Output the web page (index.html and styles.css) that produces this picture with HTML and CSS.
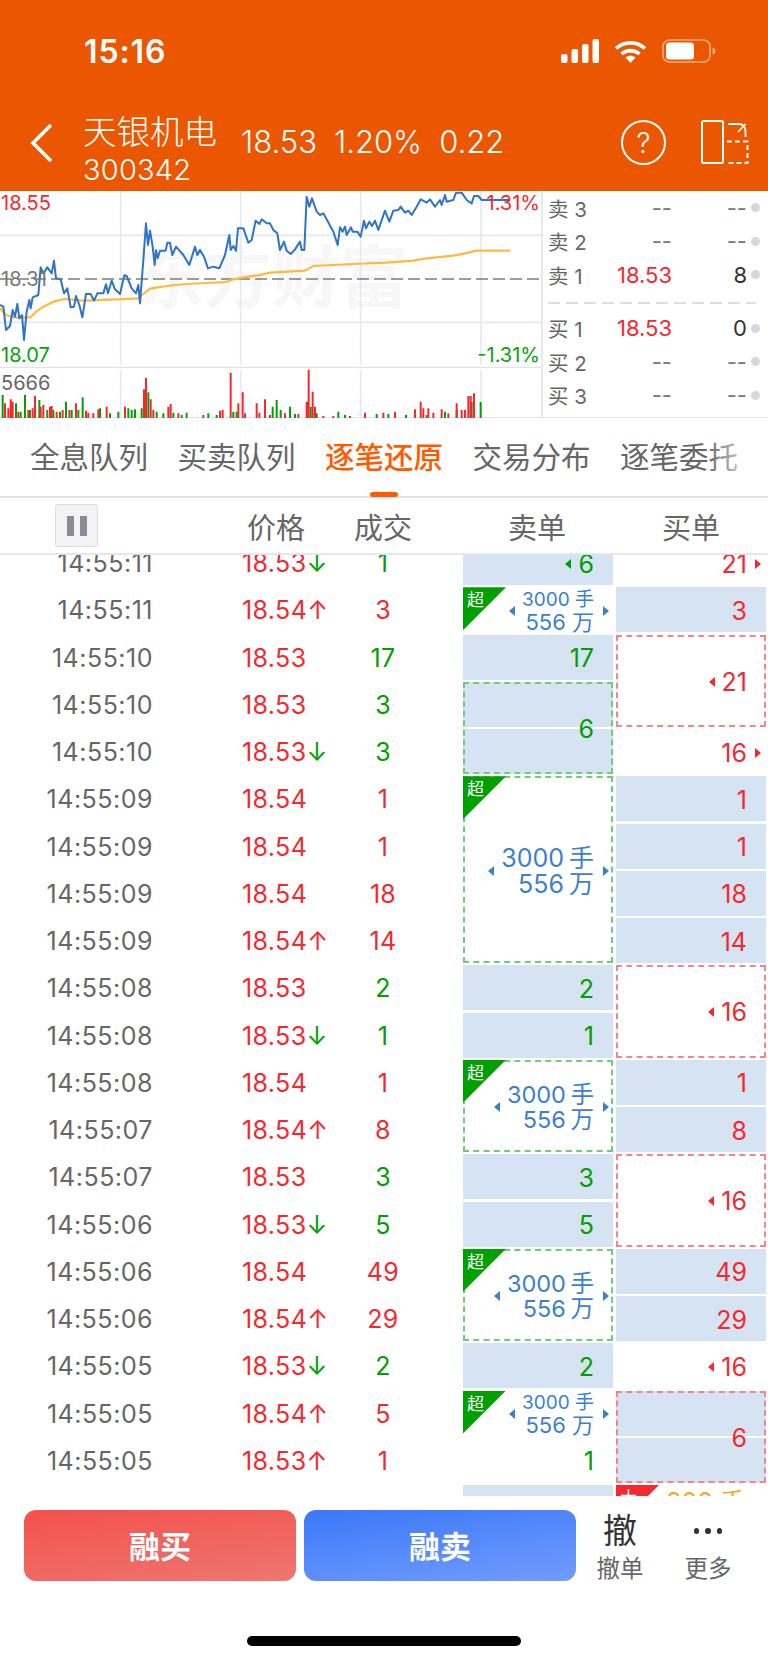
FILE: index.html
```html
<!DOCTYPE html>
<html lang="zh-CN">
<head>
<meta charset="utf-8">
<title>天银机电 300342</title>
<link rel="stylesheet" href="styles.css">
</head>
<body>
<div class="screen">
  <header class="top">
    <div class="status">
      <span class="clock">15:16</span>
      <div class="status-icons">
        <svg class="ic-signal" viewBox="0 0 38 24"><rect x="0" y="15" width="6.5" height="9" rx="2"/><rect x="10.5" y="10" width="6.5" height="14" rx="2"/><rect x="21" y="5" width="6.5" height="19" rx="2"/><rect x="31.5" y="0" width="6.5" height="24" rx="2"/></svg>
        <svg class="ic-wifi" viewBox="0 0 33 24"><path d="M2 9.5C10 2 23 2 31 9.5M7.5 15C12.5 10.5 20.500 10.500 25.500 15" fill="none" stroke="#fff" stroke-width="3.600"/><path d="M11.500 18.500C14.500 16 18.500 16 21.500 18.500L16.500 24Z" fill="#fff"/></svg>
        <svg class="ic-battery" viewBox="0 0 54 24"><rect x="1" y="1" width="47" height="22" rx="6.500" fill="none" stroke="#fff" stroke-opacity=".5" stroke-width="1.600"/><rect x="4" y="3.500" width="28" height="17" rx="3.500" fill="#fff"/><path d="M50.500 8.500C52.500 9 53.500 10.500 53.500 12S52.500 15 50.500 15.500Z" fill="#fff" fill-opacity=".5"/></svg>
      </div>
    </div>
    <div class="nav">
      <svg class="ic-back" viewBox="0 0 24 40"><path d="M22 2L4 20L22 38" fill="none" stroke="#fff" stroke-width="3.600"/></svg>
      <div class="title">
        <div class="name">天银机电</div>
        <div class="code">300342</div>
      </div>
      <div class="quote"><span>18.53</span><span>1.20%</span><span>0.22</span></div>
      <div class="help">?</div>
      <svg class="ic-switch" viewBox="0 0 48 44"><rect x="1" y="1" width="21" height="42" rx="1.500" fill="none" stroke="#fff" stroke-width="2"/><path d="M26 21.500H46.500V43H26" fill="none" stroke="#fff" stroke-width="2" stroke-dasharray="5 3"/><path d="M27 4H38C42 4 44.500 7 44.500 11V17M44.500 4L37 12" fill="none" stroke="#fff" stroke-width="1.800"/></svg>
    </div>
  </header>

  <section class="market">
    <div class="plot">
      <div class="watermark">东方财富</div>
      <svg class="plot-svg" viewBox="0 3 1623 681">
        <g class="grid">
          <path d="M362 3V525M722 3V525M1082 3V525M1443 3V525M362 540V684M722 540V684M1082 540V684M1443 540V684"/>
          <path d="M0 136H1623M0 397H1623"/>
        </g>
        <path class="grid-edge" d="M0 532H1623"/>
        <path class="ref-line" d="M0 267H1623"/>
        <path class="avg-line" d="M0 355L18 375L40 382L70 382L92 382L105 368L130 350L160 335L195 327L250 332L350 328L415 325L430 312L450 296L500 288L560 282L680 276L700 268L730 262L780 255L810 248L915 242L940 228L1060 222L1160 218L1240 212L1280 205L1360 197L1395 190L1430 182L1530 182"/>
        <path class="price-line" d="M0 345L10 350L18 420L30 408L38 360L45 380L52 342L58 385L66 375L72 450L80 365L88 330L92 355L98 322L115 315L122 232L130 250L142 232L155 250L162 212L168 265L182 268L192 310L202 295L212 352L222 350L228 318L238 345L247 382L258 312L272 312L282 332L292 310L310 310L318 283L324 310L335 272L345 298L360 312L373 256L380 258L395 295L408 310L415 285L420 340L430 210L438 100L444 165L450 122L458 170L464 225L468 180L473 205L480 182L497 182L502 158L510 158L517 195L528 170L550 195L568 225L585 170L592 195L600 180L612 200L624 235L640 230L658 235L675 195L688 135L692 180L700 168L708 182L714 115L730 115L745 158L755 150L767 92L778 102L785 88L800 100L810 100L820 120L832 130L840 180L852 155L860 182L872 192L885 178L900 155L905 180L913 180L920 20L928 50L936 25L950 65L960 75L970 70L988 103L1000 125L1013 165L1020 112L1028 125L1035 110L1040 135L1053 112L1058 125L1072 125L1082 140L1092 92L1098 115L1108 95L1116 108L1125 92L1135 120L1155 62L1168 95L1180 62L1195 60L1202 50L1215 68L1225 62L1235 75L1250 50L1262 28L1280 38L1290 28L1305 50L1320 30L1325 45L1335 15L1340 35L1360 30L1368 8L1385 8L1400 30L1415 40L1422 18L1435 18L1445 30L1530 30"/>
        <path class="vol-down" d="M8 684V615M48 684V640M62 684V665M75 684V615M90 684V660M118 684V630M142 684V660M160 684V660M180 684V665M198 684V635M215 684V660M235 684V660M248 684V622M300 684V655M330 684V670M355 684V665M385 684V655M395 684V660M405 684V658M425 684V655M445 684V607M470 684V665M490 684V670M520 684V668M545 684V675M560 684V668M625 684V670M650 684V675M700 684V665M710 684V665M818 684V650M830 684V630M842 684V660M870 684V650M885 684V672M932 684V650M950 684V670M1015 684V665M1035 684V675M1130 684V672M1165 684V672M1218 684V675M1280 684V675M1335 684V665M1370 684V660M1415 684V635M1442 684V636"/>
        <path class="vol-up" d="M15 684V640M25 684V655M32 684V628M38 684V635M55 684V665M85 684V660M98 684V655M105 684V618M122 684V650M130 684V645M150 684V650M155 684V648M170 684V665M188 684V660M208 684V660M228 684V640M258 684V662M265 684V668M280 684V670M295 684V658M320 684V650M375 684V650M432 684V598M438 684V563M452 684V628M460 684V660M505 684V650M512 684V642M535 684V670M610 684V675M660 684V662M668 684V660M692 684V548M715 684V640M728 684V607M735 684V670M770 684V640M778 684V668M795 684V628M810 684V675M855 684V670M895 684V672M920 684V635M926 684V540M938 684V605M945 684V650M970 684V678M1000 684V678M1050 684V678M1095 684V668M1150 684V668M1185 684V665M1245 684V658M1262 684V635M1270 684V655M1285 684V655M1300 684V668M1325 684V658M1345 684V670M1370 684V640M1385 684V660M1395 684V660M1405 684V618M1412 684V618M1422 684V610"/>
      </svg>
      <span class="lbl lbl-hi">18.55</span>
      <span class="lbl lbl-mid">18.31</span>
      <span class="lbl lbl-lo">18.07</span>
      <span class="lbl lbl-hi-pct">1.31%</span>
      <span class="lbl lbl-lo-pct">-1.31%</span>
      <span class="lbl lbl-vol">5666</span>
    </div>
    <div class="book">
      <div class="level"><span class="side">卖 3</span><span class="px muted">--</span><span class="qty muted">--</span><i class="dot"></i></div>
      <div class="level"><span class="side">卖 2</span><span class="px muted">--</span><span class="qty muted">--</span><i class="dot"></i></div>
      <div class="level"><span class="side">卖 1</span><span class="px">18.53</span><span class="qty">8</span><i class="dot"></i></div>
      <div class="book-split"></div>
      <div class="level"><span class="side">买 1</span><span class="px">18.53</span><span class="qty">0</span><i class="dot"></i></div>
      <div class="level"><span class="side">买 2</span><span class="px muted">--</span><span class="qty muted">--</span><i class="dot"></i></div>
      <div class="level"><span class="side">买 3</span><span class="px muted">--</span><span class="qty muted">--</span><i class="dot"></i></div>
    </div>
  </section>

  <nav class="tabs">
    <span>全息队列</span>
    <span>买卖队列</span>
    <span class="on">逐笔还原</span>
    <span>交易分布</span>
    <span>逐笔委托</span>
    <i class="tabs-fade"></i>
  </nav>

  <div class="thead">
    <button class="pause"><i></i><i></i></button>
    <span class="th-price">价格</span>
    <span class="th-vol">成交</span>
    <span class="th-sell">卖单</span>
    <span class="th-buy">买单</span>
  </div>

  <div class="tape">
    <div class="tape-inner">
      <div class="trades">
        <span class="t">14:55:11</span><span class="p">18.53<b class="g">↓</b></span><span class="v g">1</span>
        <span class="t">14:55:11</span><span class="p">18.54<b>↑</b></span><span class="v">3</span>
        <span class="t">14:55:10</span><span class="p">18.53</span><span class="v g">17</span>
        <span class="t">14:55:10</span><span class="p">18.53</span><span class="v g">3</span>
        <span class="t">14:55:10</span><span class="p">18.53<b class="g">↓</b></span><span class="v g">3</span>
        <span class="t">14:55:09</span><span class="p">18.54</span><span class="v">1</span>
        <span class="t">14:55:09</span><span class="p">18.54</span><span class="v">1</span>
        <span class="t">14:55:09</span><span class="p">18.54</span><span class="v">18</span>
        <span class="t">14:55:09</span><span class="p">18.54<b>↑</b></span><span class="v">14</span>
        <span class="t">14:55:08</span><span class="p">18.53</span><span class="v g">2</span>
        <span class="t">14:55:08</span><span class="p">18.53<b class="g">↓</b></span><span class="v g">1</span>
        <span class="t">14:55:08</span><span class="p">18.54</span><span class="v">1</span>
        <span class="t">14:55:07</span><span class="p">18.54<b>↑</b></span><span class="v">8</span>
        <span class="t">14:55:07</span><span class="p">18.53</span><span class="v g">3</span>
        <span class="t">14:55:06</span><span class="p">18.53<b class="g">↓</b></span><span class="v g">5</span>
        <span class="t">14:55:06</span><span class="p">18.54</span><span class="v">49</span>
        <span class="t">14:55:06</span><span class="p">18.54<b>↑</b></span><span class="v">29</span>
        <span class="t">14:55:05</span><span class="p">18.53<b class="g">↓</b></span><span class="v g">2</span>
        <span class="t">14:55:05</span><span class="p">18.54<b>↑</b></span><span class="v">5</span>
        <span class="t">14:55:05</span><span class="p">18.53<b>↑</b></span><span class="v">1</span>
      </div>

      <div class="orders sell">
        <div class="cell fill"><i class="tri-l"></i>6</div>
        <div class="cell large"><em class="tag">超</em><i class="tri-l"></i><div class="lot lot-s"><span>3000 手</span><span>556 万</span></div><i class="tri-r"></i></div>
        <div class="cell fill">17</div>
        <div class="cell fill dash span2">6</div>
        <div class="cell large dash span4"><em class="tag">超</em><i class="tri-l"></i><div class="lot lot-l"><span>3000 手</span><span>556 万</span></div><i class="tri-r"></i></div>
        <div class="cell fill">2</div>
        <div class="cell fill">1</div>
        <div class="cell large dash span2"><em class="tag">超</em><i class="tri-l"></i><div class="lot lot-m"><span>3000 手</span><span>556 万</span></div><i class="tri-r"></i></div>
        <div class="cell fill">3</div>
        <div class="cell fill">5</div>
        <div class="cell large dash span2"><em class="tag">超</em><i class="tri-l"></i><div class="lot lot-m"><span>3000 手</span><span>556 万</span></div><i class="tri-r"></i></div>
        <div class="cell fill">2</div>
        <div class="cell large"><em class="tag">超</em><i class="tri-l"></i><div class="lot lot-s"><span>3000 手</span><span>556 万</span></div><i class="tri-r"></i></div>
        <div class="cell">1</div>
        <div class="cell fill"></div>
      </div>

      <div class="orders buy">
        <div class="cell arrow-out">21<i class="tri-r"></i></div>
        <div class="cell fill">3</div>
        <div class="cell dash span2"><i class="tri-l"></i>21</div>
        <div class="cell arrow-out">16<i class="tri-r"></i></div>
        <div class="cell fill">1</div>
        <div class="cell fill">1</div>
        <div class="cell fill">18</div>
        <div class="cell fill">14</div>
        <div class="cell dash span2"><i class="tri-l"></i>16</div>
        <div class="cell fill">1</div>
        <div class="cell fill">8</div>
        <div class="cell dash span2"><i class="tri-l"></i>16</div>
        <div class="cell fill">49</div>
        <div class="cell fill">29</div>
        <div class="cell"><i class="tri-l"></i>16</div>
        <div class="cell fill dash span2">6</div>
        <div class="cell head-only span2"><em class="tag tag-red">大</em><span class="amber">200 手</span></div>
      </div>
    </div>
  </div>

  <footer class="actions">
    <button class="trade trade-buy">融买</button>
    <button class="trade trade-sell">融卖</button>
    <div class="tool"><span class="tool-glyph">撤</span><span class="tool-text">撤单</span></div>
    <div class="tool"><span class="tool-dots"><i></i><i></i><i></i></span><span class="tool-text">更多</span></div>
  </footer>
  <div class="home-bar"></div>
</div>
</body>
</html>
```

FILE: styles.css
```css
* { box-sizing: border-box; }

html, body {
  margin: 0;
  background: #fff;
}

body {
  font-family: Inter, "Noto Sans CJK SC", sans-serif;
  color: #666;
}

.screen {
  width: 768px;
  height: 1663px;
  overflow: hidden;
  display: flex;
  flex-direction: column;
}

/* Orange title block */
.top {
  height: 191px;
  flex: none;
  background: #eb5600;
  color: #fff;
  padding-top: 36px;
}

.status {
  height: 30px;
  display: flex;
  align-items: center;
  justify-content: space-between;
  padding: 0 52px 0 84px;
}

.clock {
  font-size: 32px;
  font-weight: 600;
  letter-spacing: .9px;
}

.status-icons {
  display: flex;
  align-items: center;
  gap: 15px;
}

.ic-signal { width: 38px; height: 24px; fill: #fff; }
.ic-wifi { width: 33px; height: 24px; }
.ic-battery { width: 54px; height: 24px; }

.nav {
  margin-top: 47px;
  display: flex;
  align-items: flex-start;
}

.ic-back {
  width: 24px;
  height: 40px;
  margin: 10px 0 0 29px;
  flex: none;
}

.title {
  margin-left: 30px;
  width: 158px;
  flex: none;
  font-weight: 300;
}

.name {
  font-size: 33.500px;
  line-height: 38px;
  white-space: nowrap;
}

.code {
  font-size: 29px;
  line-height: 38px;
  letter-spacing: .2px;
}

.quote {
  display: flex;
  gap: 17px;
  width: 380px;
  flex: none;
  margin-top: 12px;
  font-size: 31px;
  line-height: 34px;
  font-weight: 300;
}

.help {
  width: 45px;
  height: 45px;
  margin-top: 7px;
  flex: none;
  border: 2px solid #fff;
  border-radius: 50%;
  display: flex;
  align-items: center;
  justify-content: center;
  font-size: 28px;
  font-weight: 300;
}

.ic-switch {
  width: 48px;
  height: 44px;
  margin: 7px 0 0 35px;
  flex: none;
}

/* Intraday chart and the five-level book */
.market {
  height: 227px;
  flex: none;
  display: flex;
  border-bottom: 1px solid #e3e3ea;
}

.plot {
  position: relative;
  width: 541px;
  height: 227px;
  flex: none;
  overflow: hidden;
}

.plot-svg {
  position: relative;
  display: block;
  width: 541px;
  height: 227px;
}

.watermark {
  position: absolute;
  left: 136px;
  top: 46px;
  font-size: 68px;
  line-height: 80px;
  font-weight: 700;
  color: #f7f7f7;
  white-space: nowrap;
}

.grid path { fill: none; stroke: #e6e8f2; stroke-width: 5; }
.grid-edge { fill: none; stroke: #e4e4e6; stroke-width: 4; }
.ref-line { fill: none; stroke: #7c7c7c; stroke-width: 4; stroke-dasharray: 36 15; }
.avg-line { fill: none; stroke: #ffb93c; stroke-width: 6.500; stroke-linejoin: round; }
.price-line { fill: none; stroke: #2f74c6; stroke-width: 6; stroke-linejoin: round; }
.vol-up { fill: none; stroke: #f5282d; stroke-width: 6; }
.vol-down { fill: none; stroke: #00a000; stroke-width: 6; }

.lbl {
  position: absolute;
  font-size: 20px;
  line-height: 22px;
}

.lbl-hi { left: 1px; top: 1px; color: #f5282d; }
.lbl-mid { left: 1px; top: 77px; color: #777; }
.lbl-lo { left: 1px; top: 153px; color: #0aa00f; }
.lbl-hi-pct { right: 1px; top: 1px; color: #f5282d; }
.lbl-lo-pct { right: 1px; top: 153px; color: #0aa00f; }
.lbl-vol { left: 1px; top: 181px; color: #666; }

.book {
  flex: 1;
  border-left: 2px solid #e8e8f0;
  padding: 0 7px 0 5px;
}

.level {
  height: 33.5px;
  display: flex;
  align-items: center;
  font-size: 22px;
}

.side {
  width: 67px;
  font-size: 20.500px;
  color: #666;
  white-space: nowrap;
}

.px {
  width: 57px;
  text-align: right;
  color: #f5282d;
}

.qty {
  width: 75px;
  text-align: right;
  color: #333;
}

.muted { color: #777; }

.dot {
  width: 9px;
  height: 9px;
  margin-left: 4px;
  border-radius: 50%;
  background: #d5d8df;
}

.book-split {
  height: 20px;
  background: repeating-linear-gradient(90deg, #dcdce6 0 12px, transparent 12px 18px) 0 10px / 208px 2px no-repeat;
}

/* Tab strip */
.tabs {
  position: relative;
  height: 80px;
  flex: none;
  display: flex;
  gap: 29.500px;
  padding: 21px 0 0 30px;
  font-size: 29.500px;
  line-height: 36px;
  color: #666;
  white-space: nowrap;
  border-bottom: 2px solid #e0e0e8;
}

.tabs .on {
  position: relative;
  color: #ff5a00;
  font-weight: 500;
}

.tabs .on::after {
  content: "";
  position: absolute;
  left: 45px;
  top: 53px;
  width: 28px;
  height: 5px;
  border-radius: 3px;
  background: #ff5a00;
}

.tabs-fade {
  position: absolute;
  right: 0;
  top: 0;
  width: 62px;
  height: 70px;
  background: linear-gradient(90deg, rgba(255, 255, 255, 0), #fff 90%);
}

/* Column titles */
.thead {
  position: relative;
  height: 57px;
  flex: none;
  font-size: 29px;
  color: #666;
  border-bottom: 2px solid #e6e6ec;
  display: grid;
  grid-template-columns: 247px 107px 154px 154px 1fr;
  align-items: center;
}

.thead span { grid-row: 1; white-space: nowrap; }
.th-price { grid-column: 2; }
.th-vol { grid-column: 3; }
.th-sell { grid-column: 4; }
.th-buy { grid-column: 5; }

.pause {
  position: absolute;
  left: 55px;
  top: 6px;
  width: 43px;
  height: 43px;
  padding: 0;
  border: 1px solid #dcdce2;
  border-radius: 3px;
  background: #f3f3f5;
  display: flex;
  align-items: center;
  justify-content: center;
  gap: 6px;
}

.pause i {
  width: 7px;
  height: 20px;
  background: #8c8c94;
}

/* Trade tape */
.tape {
  height: 941px;
  flex: none;
  overflow: hidden;
}

.tape-inner {
  display: flex;
  margin-top: -15px;
}

.trades {
  width: 463px;
  flex: none;
  display: grid;
  grid-template-columns: 153px 197px 66px;
  grid-auto-rows: 45px;
  row-gap: 2.250px;
  align-items: center;
  font-size: 25px;
}

.t { text-align: right; color: #666; white-space: nowrap; letter-spacing: .5px; padding-top: 1px; }
.p { padding: 1px 0 0 89px; color: #f5282d; white-space: nowrap; letter-spacing: .4px; }
.p b { font-weight: 400; font-size: 25px; letter-spacing: 0; }
.v { text-align: center; color: #f5282d; letter-spacing: .3px; padding-top: 1px; }
b.g, .v.g { color: #00a000; }

.orders {
  display: grid;
  grid-auto-rows: 45px;
  row-gap: 2.250px;
  font-size: 25px;
  flex: none;
}

.sell { width: 150px; color: #00a000; margin-right: 3px; }
.buy { width: 150px; color: #f5282d; }

.cell {
  position: relative;
  display: flex;
  align-items: center;
  justify-content: flex-end;
  gap: 7px;
  padding: 2px 19px 0 0;
}

.fill { background: #d6e3f2; }
.span2 { grid-row: span 2; }
.span4 { grid-row: span 4; }

.dash { border: 2px dashed #6ccf76; padding-right: 17px; }
.buy .dash { border-color: #f68585; }
.fill.dash {
  background: linear-gradient(#d6e3f2 calc(50% - 1px), #fff 0 calc(50% + 1px), #d6e3f2 0);
}

.large { padding-right: 4px; color: #3c7fcc; }
.large.dash { padding-right: 2px; }

.arrow-out { padding-right: 5px; gap: 8px; }

.head-only { align-items: flex-start; }
.amber { color: #ff9f1a; line-height: 30px; margin-right: 2px; }

.tri-l, .tri-r {
  width: 0;
  height: 0;
  flex: none;
  border-top: 5px solid transparent;
  border-bottom: 5px solid transparent;
}

.tri-l { border-right: 6px solid currentColor; }
.tri-r { border-left: 6px solid currentColor; }

.lot {
  display: flex;
  flex-direction: column;
  align-items: flex-end;
  white-space: nowrap;
  margin-right: 2px;
}

.lot-s span:first-child { font-size: 19px; line-height: 22px; }
.lot-s span:last-child { font-size: 22px; line-height: 22px; }
.lot-m span { font-size: 23.500px; line-height: 25px; word-spacing: -2px; }
.lot-l span { font-size: 25px; line-height: 26px; word-spacing: -2px; }

.tag {
  position: absolute;
  left: 0;
  top: 0;
  width: 43px;
  height: 43px;
  padding: 3px 0 0 4px;
  background: #00a000;
  clip-path: polygon(0 0, 100% 0, 0 100%);
  color: #fff;
  font-size: 17px;
  font-style: normal;
  line-height: 20px;
}

.dash .tag { left: -2px; top: -2px; }
.tag-red { background: #f5282d; }

/* Bottom actions */
.actions {
  height: 85px;
  flex: none;
  display: flex;
  align-items: flex-start;
  padding: 14px 0 0 24px;
}

.trade {
  width: 272px;
  height: 71px;
  padding: 0 0 3px;
  border: 0;
  border-radius: 12px;
  font-family: inherit;
  font-size: 31px;
  font-weight: 700;
  color: #fff;
}

.trade-buy { background: linear-gradient(172deg, #f4504d, #ee7770); margin-right: 8px; }
.trade-sell { background: linear-gradient(172deg, #3b78f8, #719cff); }

.tool {
  width: 88px;
  height: 73px;
  padding-top: 2px;
  flex: none;
  display: flex;
  flex-direction: column;
  align-items: center;
  justify-content: space-between;
}

.tool-glyph {
  font-size: 34px;
  line-height: 38px;
  color: #333;
}

.tool-dots {
  height: 38px;
  display: flex;
  align-items: center;
  gap: 6px;
}

.tool-dots i {
  width: 5.500px;
  height: 5.500px;
  border-radius: 50%;
  background: #333;
}

.tool-text {
  font-size: 23.500px;
  line-height: 28px;
  color: #666;
}

.home-bar {
  width: 274px;
  height: 10px;
  margin: 55px 0 0 247px;
  flex: none;
  border-radius: 5px;
  background: #000;
}
```
